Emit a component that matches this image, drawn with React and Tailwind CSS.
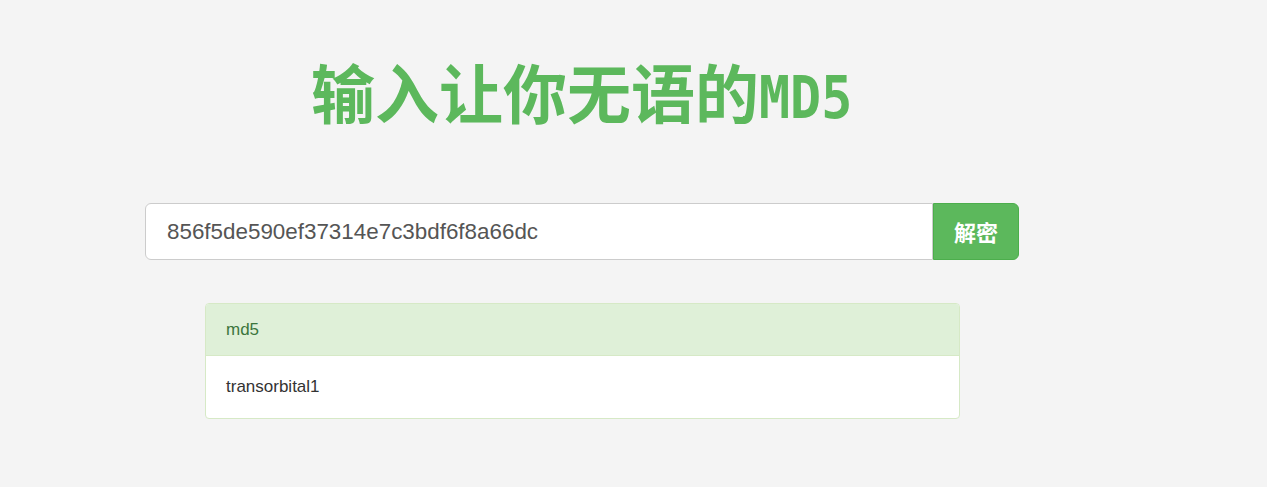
export default function App() {
  return (
    <div className="min-h-[487px] w-full bg-[#f4f4f4] font-['Liberation_Sans',sans-serif]">
      <div className="ml-[145px] w-[874px] flex flex-col pt-[52px]">
        <h1 className="h-[77px] flex items-baseline justify-center text-[#5cb85c] font-bold text-[64px] leading-[77px] font-['Noto_Sans_CJK_SC',sans-serif]">
          <span>输入让你无语的</span>
          <span className="inline-block font-['DejaVu_Sans_Mono',monospace] text-[58px] scale-x-[0.89] origin-left mr-[-11px]">MD5</span>
        </h1>
        <div className="mt-[74px] flex h-[57px]">
          <div className="flex-1 flex items-center bg-white border border-[#ccc] rounded-l-[6px] pl-[21px] text-[22.4px] text-[#555]">
            856f5de590ef37314e7c3bdf6f8a66dc
          </div>
          <button className="w-[86px] bg-[#5cb85c] border border-[#4cae4c] rounded-r-[6px] text-white font-bold text-[22px] font-['Noto_Sans_CJK_SC',sans-serif]">
            解密
          </button>
        </div>
        <div className="mt-[43px] ml-[60px] w-[755px] border border-[#d6e9c6] rounded-[4px] bg-white overflow-hidden">
          <div className="h-[52px] flex items-center px-[20px] bg-[#dff0d8] border-b border-[#d6e9c6] text-[#3c763d] text-[17px]">
            md5
          </div>
          <div className="h-[62px] flex items-center px-[20px] text-[#333] text-[17px]">
            transorbital1
          </div>
        </div>
      </div>
    </div>
  );
}
